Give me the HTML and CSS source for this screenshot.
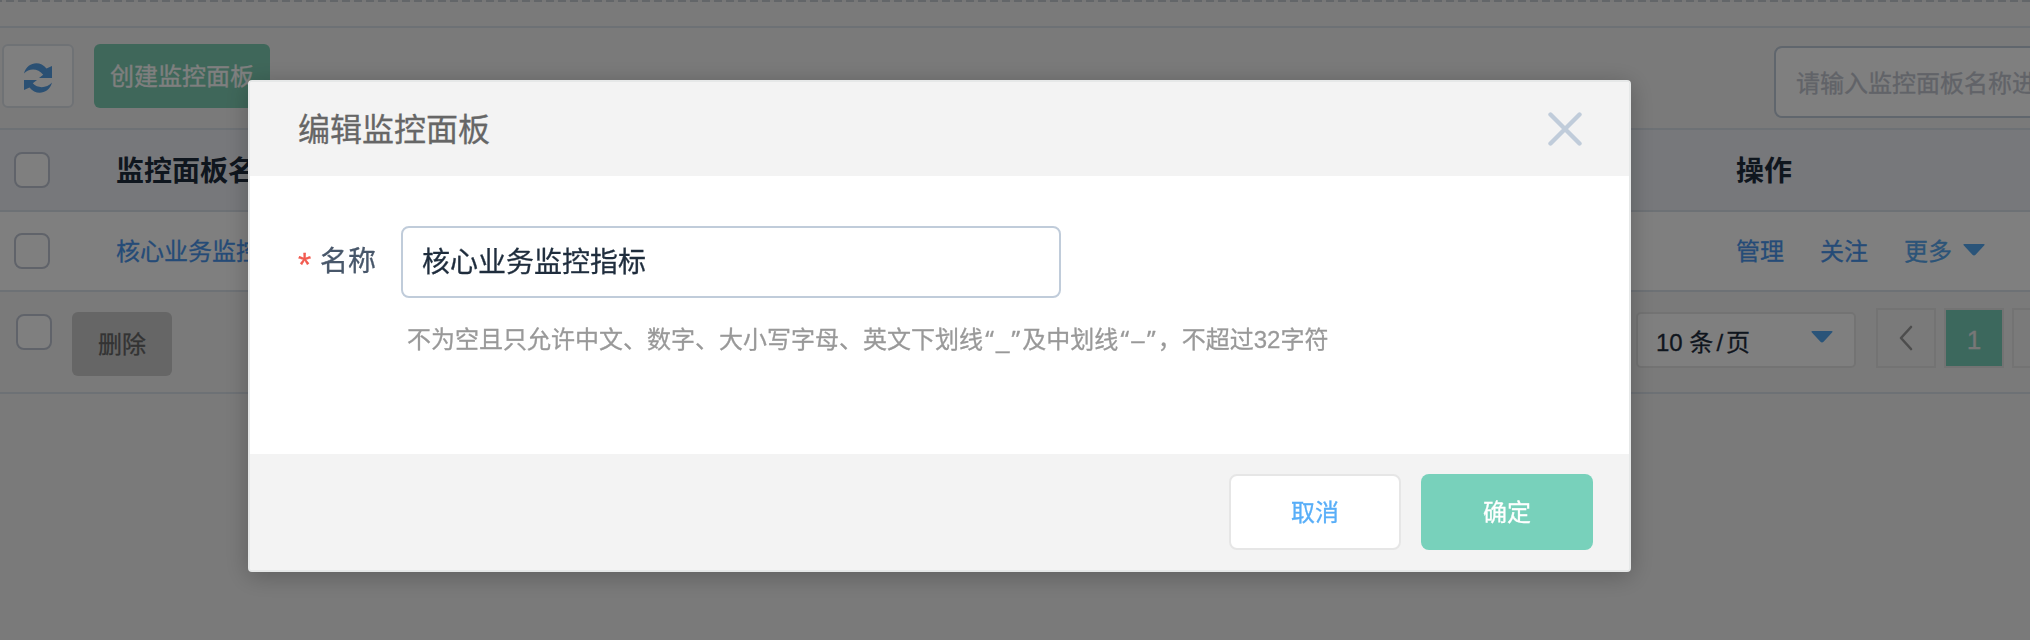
FILE: index.html
```html
<!DOCTYPE html>
<html lang="zh-CN">
<head>
<meta charset="utf-8">
<title>编辑监控面板</title>
<link rel="stylesheet" href="styles.css">
</head>
<body>
<div class="page">
  <div class="divider"></div>
  <div class="toolbar">
    <button class="refresh" aria-label="刷新">
      <svg width="30" height="30" viewBox="0 0 30 30" fill="#57a0e6"><path d="M1 10.500C4-1 17-3 23.500 5.500L29 3V15H16l4.200-3.300C15 5 6 5 1 10.500z"/><path d="M29 19.500C26 31 13 33 6.500 24.500L1 27V17H14l-4.200 3.300C15 26 24 25 29 19.500z"/></svg>
    </button>
    <button class="create">创建监控面板</button>
    <div class="search">请输入监控面板名称进行查询</div>
  </div>
  <div class="row head">
    <span class="check"></span>
    <span class="col-name">监控面板名称</span>
    <span class="col-ops">操作</span>
  </div>
  <div class="row item">
    <span class="check"></span>
    <a class="col-name">核心业务监控指标</a>
    <div class="col-ops links"><a>管理</a><a>关注</a><a class="more">更多<svg width="24" height="14" viewBox="0 0 24 14"><path d="M2.500 1h19q2 0 .6 1.600l-8.300 9q-1.800 1.800-3.600 0l-8.300-9Q.5 1 2.500 1z"/></svg></a></div>
  </div>
  <div class="row foot">
    <span class="check"></span>
    <button class="delete">删除</button>
    <div class="pager">
      <div class="size"><span>10 条<i>/</i>页</span><svg width="24" height="14" viewBox="0 0 24 14"><path d="M2.500 1h19q2 0 .6 1.600l-8.300 9q-1.800 1.800-3.600 0l-8.300-9Q.5 1 2.500 1z"/></svg></div>
      <span class="pg prev"><svg width="14" height="26" viewBox="0 0 14 26"><path d="M12 2L2 13l10 11"/></svg></span>
      <span class="pg current">1</span>
      <span class="pg"></span>
    </div>
  </div>
</div>
<div class="mask">
  <div class="modal">
    <div class="modal-head">
      <h1>编辑监控面板</h1>
      <svg class="close" width="34" height="34" viewBox="0 0 34 34"><path d="M2.500 2.500l29 29M31.500 2.500L2.500 31.500"/></svg>
    </div>
    <div class="modal-body">
      <div class="field">
        <span class="star">*</span><label>名称</label>
        <div class="input">核心业务监控指标</div>
      </div>
      <p class="hint">不为空且只允许中文、数字、大小写字母、英文下划线<q>“</q>_<q>”</q>及中划线<q>“</q>–<q>”</q>，不超过32字符</p>
    </div>
    <div class="modal-foot">
      <button class="cancel">取消</button>
      <button class="ok">确定</button>
    </div>
  </div>
</div>
</body>
</html>
```
FILE: styles.css
```css
* { box-sizing: border-box; }
body {
  margin: 0;
  width: 2030px;
  height: 640px;
  overflow: hidden;
  background: #f4f4f4;
  font-family: "Liberation Sans", "Noto Sans CJK SC", sans-serif;
  font-size: 24px;
  -webkit-text-stroke: .3px currentColor;
}
button {
  border: 0;
  padding: 0 0 4px;
  font: inherit;
  white-space: nowrap;
  flex: none;
}
svg { flex: none; }
.page { width: 2030px; overflow: hidden; }
.divider {
  height: 28px;
  border-bottom: 2px solid #dbe2ea;
  background: repeating-linear-gradient(90deg, #c6ccd3 0 8px, #f0f0f0 8px 12px) -6px 0 / 2040px 2px no-repeat;
}
.toolbar {
  display: flex;
  align-items: flex-start;
  height: 102px;
  padding: 16px 0 0 2px;
  border-bottom: 2px solid #dbe2ea;
}
.refresh {
  width: 72px;
  height: 64px;
  padding: 4px 0 0;
  display: flex;
  align-items: center;
  justify-content: center;
  border: 2px solid #dfe4eb;
  border-radius: 6px;
  background: #fff;
}
.create {
  width: 176px;
  height: 64px;
  margin-left: 20px;
  border-radius: 6px;
  background: #7fcfb5;
  color: #fff;
}
.search {
  flex: none;
  width: 400px;
  height: 72px;
  margin: 2px 0 0 1504px;
  padding-left: 20px;
  border: 2px solid #c0ccda;
  border-radius: 8px;
  background: #fff;
  color: #c2c6d0;
  line-height: 72px;
  white-space: nowrap;
}
.row {
  display: flex;
  align-items: center;
  border-bottom: 2px solid #dbe2ea;
}
.check {
  flex: none;
  width: 36px;
  height: 36px;
  margin-left: 14px;
  border: 2px solid #c0c7d4;
  border-radius: 8px;
  background: #fff;
}
.col-name { margin-left: 66px; width: 1620px; flex: none; }
.head {
  height: 82px;
  background: #eef1f6;
  color: #1f2d3d;
  font-size: 28px;
  font-weight: 700;
  -webkit-text-stroke: 0;
}
.head .col-name, .head .col-ops, .item .col-name, .item .col-ops { padding-bottom: 2px; }
.item { height: 80px; padding-bottom: 1px; background: #fff; }
.item a { color: #4a97ef; }
.links { display: flex; gap: 36px; }
.links .more { display: flex; align-items: center; gap: 10px; color: #58a8f0; }
.more svg, .size svg { fill: #55a9f2; }
.foot { height: 102px; align-items: flex-start; }
.foot .check { margin: 22px 0 0 16px; }
.delete {
  width: 100px;
  height: 64px;
  margin: 20px 0 0 20px;
  border-radius: 6px;
  background: #ccc;
  color: #666;
}
.pager { display: flex; margin: 16px 0 0 1464px; }
.size {
  display: flex;
  justify-content: space-between;
  align-items: center;
  width: 220px;
  height: 56px;
  margin-top: 4px;
  padding: 0 20px 0 18px;
  border: 2px solid #e6e6e6;
  border-radius: 5px;
  background: #fff;
  color: #1f2d3d;
  white-space: nowrap;
}
.size svg { margin-top: -6px; }
.size i { font-style: normal; padding: 0 3px; }
.pg {
  flex: none;
  width: 60px;
  height: 60px;
  margin-left: 8px;
  border: 2px solid #e6e6e6;
  display: flex;
  align-items: center;
  justify-content: center;
}
.prev { margin-left: 20px; }
.prev svg { fill: none; stroke: #9b9b9b; stroke-width: 2.6; stroke-linecap: round; stroke-linejoin: round; }
.current { background: #78d1bb; background-clip: padding-box; color: #eee; padding-top: 5px; font-size: 26px; }
.mask {
  position: fixed;
  inset: 0;
  padding: 80px 0 0 248px;
  background: rgba(0, 0, 0, .5);
}
.modal {
  width: 1383px;
  height: 492px;
  display: flex;
  flex-direction: column;
  border: 2px solid #e6e8e8;
  border-radius: 4px;
  background: #fff;
  box-shadow: 0 4px 24px rgba(0, 0, 0, .24);
  overflow: hidden;
}
.modal-head {
  display: flex;
  justify-content: space-between;
  align-items: center;
  height: 94px;
  padding: 0 47px 0 48px;
  background: #f3f3f3;
}
h1 { margin: 0; padding-bottom: 5px; font-size: 32px; font-weight: 400; color: #666; }
.close { fill: none; stroke: #c0ccda; stroke-width: 4.4; stroke-linecap: round; }
.modal-body { flex: 1; padding: 50px 0 0 48px; }
.field { display: flex; align-items: center; height: 72px; font-size: 28px; color: #48576a; }
.star { width: 22px; color: #f25b50; font-size: 34px; padding-top: 4px; }
.field label { margin-top: -6px; }
.input {
  width: 660px;
  height: 72px;
  margin-left: 25px;
  padding-left: 19px;
  border: 2px solid #c0ccda;
  border-radius: 8px;
  color: #1f2d3d;
  line-height: 70px;
}
.hint { margin: 24px 0 0 109px; line-height: 36px; color: #999; white-space: nowrap; }
.hint q { display: inline-block; width: 13px; text-align: center; font-family: "Noto Sans", sans-serif; line-height: 20px; }
.hint q::before, .hint q::after { content: none; }
.modal-foot {
  display: flex;
  justify-content: flex-end;
  align-items: flex-start;
  gap: 20px;
  height: 116px;
  padding: 20px 36px 0 0;
  background: #f3f3f3;
}
.modal-foot button { width: 172px; height: 76px; border-radius: 8px; }
.cancel { border: 2px solid #e6e6e6; background: #fff; color: #58aef8; }
.ok { background: #78d1bb; color: #fff; }
```
